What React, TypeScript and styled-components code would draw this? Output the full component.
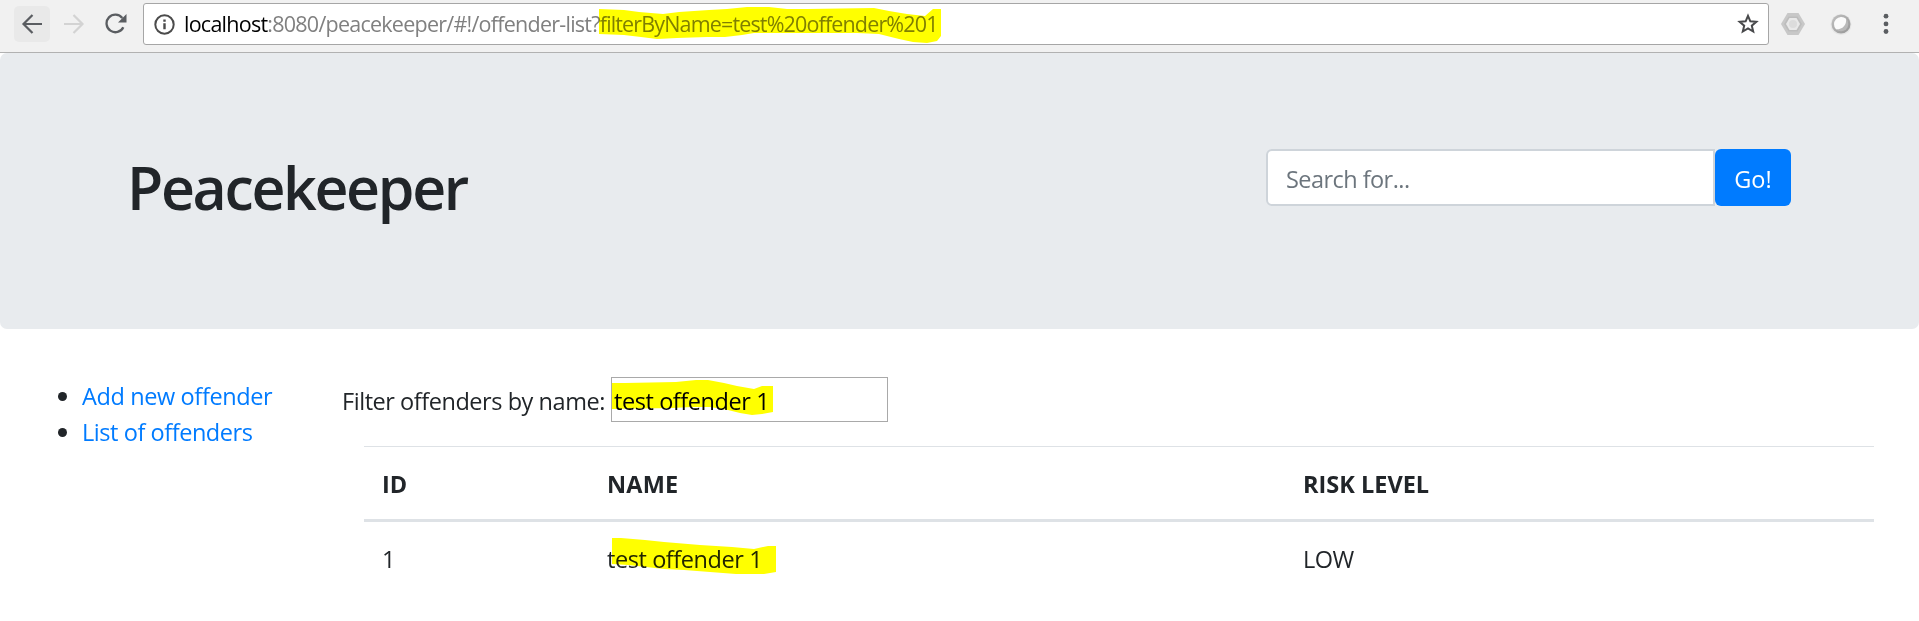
import React from "react";
import styled, { createGlobalStyle } from "styled-components";

const GlobalStyle = createGlobalStyle`
  *, *::before, *::after { box-sizing: border-box; }
  body {
    margin: 0;
    background: #fff;
    color: #212529;
    font-family: "Segoe UI", "Open Sans", "Noto Sans", sans-serif;
    font-size: 23.5px;
    line-height: 36px;
    overflow: hidden;
  }
`;

const Text = styled.span<{ $track?: number }>`
  letter-spacing: ${(p) => p.$track ?? 0}px;
  white-space: pre;
`;

const BrowserBar = styled.header`
  display: flex;
  align-items: flex-start;
  height: 53px;
  padding: 3px 0 0 14px;
  background: #f1f1f1;
  border-bottom: 1px solid #b1b1b1;
`;

const NavButton = styled.button<{ $active?: boolean }>`
  display: flex;
  align-items: center;
  justify-content: center;
  width: 36px;
  height: 36px;
  margin: 3px 6px 0 0;
  padding: 0;
  border: 0;
  border-radius: 5px;
  background: ${(p) => (p.$active ? "#e9e9e9" : "transparent")};
`;

const AddressBar = styled.div`
  display: flex;
  align-items: center;
  width: 1626px;
  height: 42px;
  margin-left: 3px;
  padding: 0 9px 0 10px;
  background: #fff;
  border: 1px solid #a6a6a6;
  border-radius: 3px;
`;

const Url = styled.div`
  flex: 1;
  display: flex;
  margin-left: 9px;
  font-size: 21.5px;
  line-height: 30px;
  color: #808080;
`;

const Host = styled(Text)`
  color: #000;
`;

const Extensions = styled.div`
  display: flex;
  align-items: center;
  height: 42px;
  margin-left: 12px;
`;

const ExtensionIcon = styled.span<{ $gap: number }>`
  display: flex;
  margin-right: ${(p) => p.$gap}px;
`;

const Marked = styled.span`
  position: relative;
  display: inline-block;
`;

const Marker = styled.svg<{ $x: number; $y: number }>`
  position: absolute;
  left: ${(p) => p.$x}px;
  top: ${(p) => p.$y}px;
  mix-blend-mode: multiply;
  pointer-events: none;
  fill: #ff0;
`;

const PageArea = styled.div`
  background: #fff;
`;

const Jumbotron = styled.section`
  display: flex;
  justify-content: space-between;
  align-items: flex-start;
  height: 276px;
  padding: 96px 128px 0 127px;
  background: #e8ebee;
  border-radius: 7px;
`;

const Title = styled.h1`
  margin: 2px 0 0;
  font-size: 59px;
  font-weight: 600;
  line-height: 72px;
`;

const SearchGroup = styled.form`
  display: flex;
  height: 57px;
`;

const SearchInput = styled.input`
  width: 449px;
  padding: 3px 18px 0;
  border: 2px solid #ced4da;
  border-radius: 6px 0 0 6px;
  background: #fff;
  font: inherit;
  letter-spacing: -0.55px;
  &::placeholder {
    color: #6c757d;
    opacity: 1;
  }
`;

const GoButton = styled.button`
  width: 76px;
  padding: 3px 0 0;
  border: 0;
  border-radius: 6px;
  background: #007bff;
  color: #fff;
  font: inherit;
`;

const Content = styled.main`
  display: flex;
  padding: 48px 45px 0 0;
`;

const Sidebar = styled.ul`
  width: 341px;
  margin: 1px 0 0;
  padding: 0 0 0 82px;
  list-style: none;
`;

const SidebarItem = styled.li`
  display: flex;
  align-items: center;
  height: 36px;
  &::before {
    content: "";
    width: 9px;
    height: 9px;
    margin: 0 15px 0 -24px;
    border-radius: 50%;
    background: #212529;
  }
`;

const SidebarLink = styled.a`
  color: #007bff;
  text-decoration: none;
`;

const ListPanel = styled.section`
  flex: 1;
`;

const FilterRow = styled.div`
  display: flex;
  align-items: center;
  height: 45px;
`;

const FilterLabel = styled.label`
  width: 270px;
  padding: 2px 0 0 1px;
`;

const FilterInput = styled.input`
  display: block;
  width: 277px;
  height: 45px;
  padding: 2px 2px 0;
  border: 1px solid #a9a9a9;
  background: #fff;
  color: #000;
  font: inherit;
  letter-spacing: -0.42px;
`;

const Table = styled.table`
  width: 1510px;
  margin: 24px 0 0 23px;
  border-collapse: separate;
  border-spacing: 0;
  table-layout: fixed;
`;

const HeadCell = styled.th<{ $width: number }>`
  width: ${(p) => p.$width}px;
  height: 76px;
  padding: 2px 18px 0;
  border-top: 1px solid #dee2e6;
  border-bottom: 3px solid #dee2e6;
  text-align: left;
  font-weight: 700;
`;

const Cell = styled.td`
  height: 74px;
  padding: 0 18px;
`;

const BackIcon = ({ color }: { color: string }) => (
  <svg width="22" height="22" viewBox="0 0 22 22" fill="none" stroke={color} strokeWidth="2.2">
    <path d="M21 11H2.5M11.5 2L2.5 11l9 9" />
  </svg>
);

const ForwardIcon = ({ color }: { color: string }) => (
  <svg width="22" height="22" viewBox="0 0 22 22" fill="none" stroke={color} strokeWidth="2.2">
    <path d="M1 11h18.500M10.500 2l9 9-9 9" />
  </svg>
);

const ReloadIcon = () => (
  <svg width="22" height="22" viewBox="0 0 22 22" fill="none">
    <path d="M18.300 14.200A8.800 8.800 0 1 1 17.300 5" stroke="#5a5d61" strokeWidth="2.300" />
    <path d="M21.500 1v8.500H13z" fill="#5a5d61" />
  </svg>
);

const InfoIcon = () => (
  <svg width="21" height="21" viewBox="0 0 21 21" fill="none">
    <circle cx="10.500" cy="10.500" r="9.200" stroke="#4b4b4b" strokeWidth="2" />
    <path d="M10.500 9.200v6M10.500 5.500v2.200" stroke="#4b4b4b" strokeWidth="2.400" />
  </svg>
);

const StarIcon = () => (
  <svg width="22" height="22" viewBox="0 0 22 22" fill="none" stroke="#48494b" strokeWidth="2">
    <path d="M11 2.800l2.350 5.500 6 .5-4.550 3.900 1.400 5.800L11 15.400l-5.200 3.100 1.400-5.800-4.550-3.900 6-.5z" />
  </svg>
);

const HexIcon = () => (
  <svg width="24" height="22" viewBox="0 0 24 22">
    <path d="M6.500 0h11L24 11l-6.500 11h-11L0 11z" fill="#c8c8c8" />
    <path d="M7.500 3.500h9L21 11l-4.500 7.500h-9L3 11z" fill="#bdbdbd" />
    <path d="M8.500 5h7l3.500 6-3.500 6h-7L5 11z" fill="#e9e9e9" />
    <circle cx="12" cy="11" r="4" fill="#dcdcdc" />
  </svg>
);

const OrbIcon = () => (
  <svg width="22" height="22" viewBox="0 0 22 22">
    <defs>
      <linearGradient id="orb" x1="0" y1="0" x2="1" y2="1">
        <stop offset="0" stopColor="#c2c2c2" />
        <stop offset="1" stopColor="#959595" />
      </linearGradient>
    </defs>
    <circle cx="11" cy="11.500" r="10.500" fill="#e6e6e6" />
    <circle cx="11" cy="11" r="9.500" fill="url(#orb)" />
    <circle cx="11" cy="11" r="7.300" fill="#b9b9b9" />
    <path d="M16 5.700C17 12 12.500 16.500 6 16.300A7.300 7.300 0 0 1 16 5.700z" fill="#fbfbfb" />
  </svg>
);

const MenuIcon = () => (
  <svg width="6" height="22" viewBox="0 0 6 22" fill="#5a5d61">
    <circle cx="3" cy="3.200" r="2.400" />
    <circle cx="3" cy="10.900" r="2.400" />
    <circle cx="3" cy="18.500" r="2.400" />
  </svg>
);

export default function App() {
  return (
    <>
      <GlobalStyle />
      <BrowserBar>
        <NavButton $active aria-label="Back"><BackIcon color="#5a5d61" /></NavButton>
        <NavButton aria-label="Forward"><ForwardIcon color="#d3d3d3" /></NavButton>
        <NavButton aria-label="Reload"><ReloadIcon /></NavButton>
        <AddressBar>
          <InfoIcon />
          <Url>
            <Host $track={-0.75}>localhost</Host>
            <Text $track={-0.75}>:8080/peacekeeper/#!/offender-list?</Text>
            <Marked>
              <Text $track={-0.85}>filterByName=test%20offender%201</Text>
              <Marker $x={-1} $y={-2} width="342" height="37" viewBox="0 0 342 37">
                <path d="M0 2L25 3L40 5L64 7L80 5L110 3L128 2L148 0H170L188 2H208L275 1L290 4L308 7L326 9L334 2H342V29L338 34L328 36L314 35L300 32L280 27L258 26H155L143 28L126 30L108 30L78 31L58 32L42 30L25 28L0 27Z" />
              </Marker>
            </Marked>
          </Url>
          <StarIcon />
        </AddressBar>
        <Extensions>
          <ExtensionIcon $gap={25}><HexIcon /></ExtensionIcon>
          <ExtensionIcon $gap={31}><OrbIcon /></ExtensionIcon>
          <ExtensionIcon $gap={0}><MenuIcon /></ExtensionIcon>
        </Extensions>
      </BrowserBar>
      <PageArea>
        <Jumbotron>
          <Title><Text $track={-2.35}>Peacekeeper</Text></Title>
          <SearchGroup>
            <SearchInput placeholder="Search for..." />
            <GoButton type="button"><Text $track={0}>Go!</Text></GoButton>
          </SearchGroup>
        </Jumbotron>
        <Content>
          <Sidebar>
            <SidebarItem><SidebarLink href="#add"><Text $track={-0.38}>Add new offender</Text></SidebarLink></SidebarItem>
            <SidebarItem><SidebarLink href="#list"><Text $track={-0.44}>List of offenders</Text></SidebarLink></SidebarItem>
          </Sidebar>
          <ListPanel>
            <FilterRow>
              <FilterLabel htmlFor="filter"><Text $track={-0.45}>Filter offenders by name:</Text></FilterLabel>
              <Marked>
                <FilterInput id="filter" defaultValue="test offender 1" />
                <Marker $x={1} $y={3} width="161" height="36" viewBox="0 0 161 36">
                  <path d="M0 3H13L64 2L84 0H96L112 3L125 6L142 9L150 6H161V32L150 34L140 35L128 33L116 30L98 27L80 27L60 28L0 29Z" />
                </Marker>
              </Marked>
            </FilterRow>
            <Table>
              <thead>
                <tr>
                  <HeadCell $width={225}><Text>ID</Text></HeadCell>
                  <HeadCell $width={696}><Text $track={0.2}>NAME</Text></HeadCell>
                  <HeadCell $width={589}><Text>RISK LEVEL</Text></HeadCell>
                </tr>
              </thead>
              <tbody>
                <tr>
                  <Cell>1</Cell>
                  <Cell>
                    <Marked>
                      <Text $track={-0.42}>test offender 1</Text>
                      <Marker $x={5} $y={-3} width="164" height="36" viewBox="0 0 164 36">
                        <path d="M0 0H9L33 2L52 4L88 7L120 9L142 11L156 8H164V34L152 36H124L98 34L72 32L52 31L34 29L16 27L0 26Z" />
                      </Marker>
                    </Marked>
                  </Cell>
                  <Cell><Text $track={-0.5}>LOW</Text></Cell>
                </tr>
              </tbody>
            </Table>
          </ListPanel>
        </Content>
      </PageArea>
    </>
  );
}
